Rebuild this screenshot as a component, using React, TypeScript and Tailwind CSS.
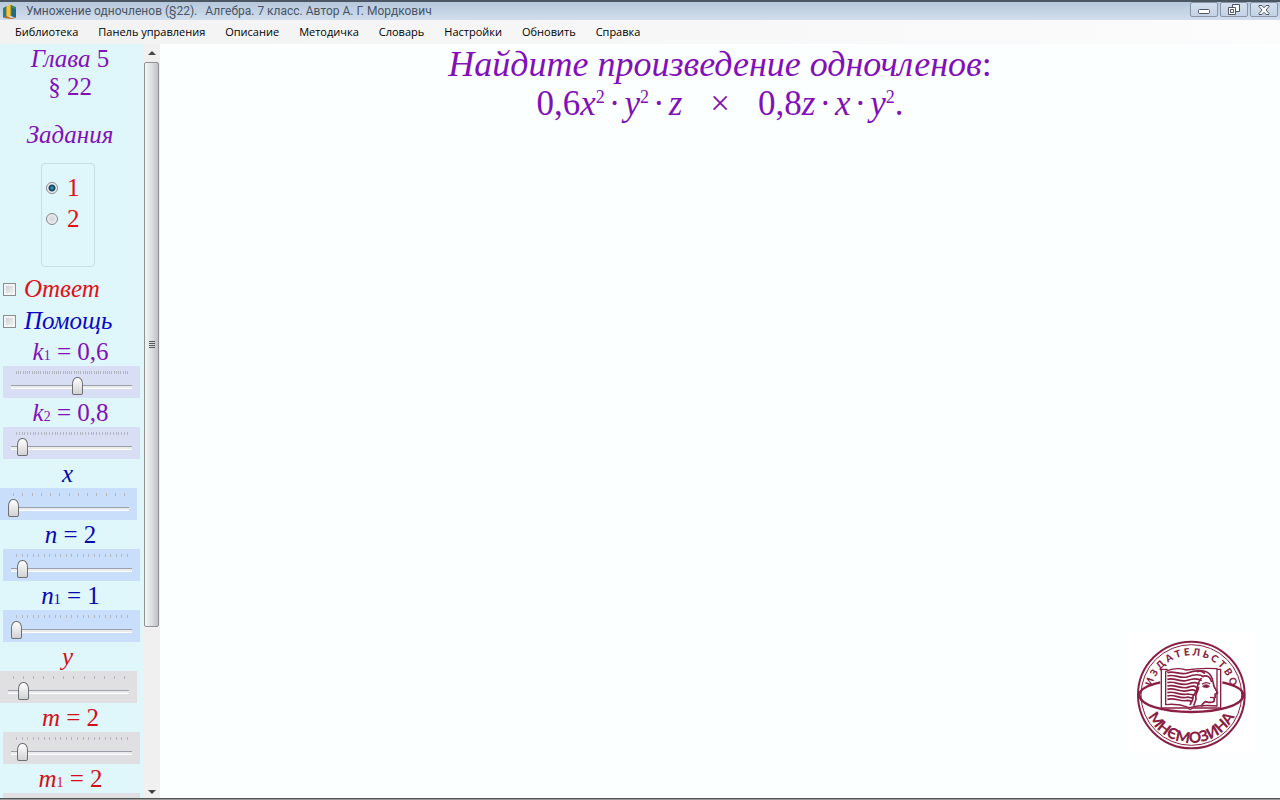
/* =========================================================
   ALGEBRA TRAINER
   Window with a menu, a panel of task parameters on the
   left and the task statement on the right.
========================================================= */

import { useState } from 'react';
import type { ReactNode } from 'react';
import clsx from 'clsx';

const MENU = [
  'Библиотека',
  'Панель управления',
  'Описание',
  'Методичка',
  'Словарь',
  'Настройки',
  'Обновить',
  'Справка',
];

type Param = {
  name: string;
  sub?: string;
  value?: string;
  position: number;
  ticks: number;
  text: string;
  bg: string;
  wide?: boolean;
};

const PARAMS: Param[] = [
  { name: 'k', sub: '1', value: '0,6', position: 55, ticks: 51, text: 'text-[#8210b8]', bg: 'bg-[#d8def4]' },
  { name: 'k', sub: '2', value: '0,8', position: 5, ticks: 41, text: 'text-[#8210b8]', bg: 'bg-[#d8def4]' },
  { name: 'x', position: 0, ticks: 13, text: 'text-[#0808b0]', bg: 'bg-[#c9defa]', wide: true },
  { name: 'n', value: '2', position: 5, ticks: 21, text: 'text-[#0808b0]', bg: 'bg-[#c9defa]' },
  { name: 'n', sub: '1', value: '1', position: 0, ticks: 21, text: 'text-[#0808b0]', bg: 'bg-[#c9defa]' },
  { name: 'y', position: 9, ticks: 12, text: 'text-[#d01018]', bg: 'bg-[#e0e0e2]', wide: true },
  { name: 'm', value: '2', position: 5, ticks: 21, text: 'text-[#d01018]', bg: 'bg-[#e0e0e2]' },
  { name: 'm', sub: '1', value: '2', position: 5, ticks: 21, text: 'text-[#d01018]', bg: 'bg-[#e0e0e2]' },
];

function AppIcon() {
  return (
    <svg viewBox="0 0 14 15" className="h-[15px] w-[14px]" aria-hidden="true">
      <path d="M0 4 4 2v10l-4 2z" fill="#2a7f8f" />
      <path d="M3 3 8 0v11l-5 3z" fill="#f2c53a" />
      <path d="M8 1l5 2v11l-5-2z" fill="#2c8f6a" />
      <path d="M9 4l4 1v9l-4-2z" fill="#1f6d83" />
      <path d="M0 14l4-2 4 2 5-1v1l-5 1z" fill="#c8762c" />
      <path d="M3 3v11M8 1v11" stroke="#6b5a28" strokeWidth=".7" />
    </svg>
  );
}

function WindowButton({ label, children }: { label: string; children: ReactNode }) {
  return (
    <button
      type="button"
      aria-label={label}
      className="flex h-[15px] w-[28px] items-center justify-center rounded-xs border border-[#8995a8] bg-gradient-to-b from-[#d3dfee] to-[#c3d2e5]"
    >
      {children}
    </button>
  );
}

function TitleBar() {
  return (
    <header className="flex h-5 shrink-0 items-center border-t-2 border-[#4b5663] bg-gradient-to-b from-[#b7c8dc] to-[#d0deed] pr-[2px] pl-[3px]">
      <AppIcon />
      <h1 className="ml-[9px] flex gap-2 font-['Roboto',sans-serif] text-xs whitespace-nowrap text-[#4a5565]">
        <span>Умножение одночленов (§22).</span>
        <span>Алгебра. 7 класс. Автор А. Г. Мордкович</span>
      </h1>
      <div className="ml-auto flex gap-[2px] self-start">
        <WindowButton label="Свернуть">
          <svg viewBox="0 0 12 5" className="mt-1 h-[5px] w-3">
            <rect x=".5" y=".5" width="11" height="4" rx="1" fill="#fff" stroke="#4e5666" />
          </svg>
        </WindowButton>
        <WindowButton label="Восстановить">
          <svg viewBox="0 0 12 11" className="h-[11px] w-3" fill="#fff" stroke="#4e5666">
            <path d="M4.5.5h7v7h-7z" />
            <path d="M.5 3.5h7v7h-7z" />
            <path d="M2.5 5.5h3v3h-3z" />
          </svg>
        </WindowButton>
        <WindowButton label="Закрыть">
          <svg viewBox="0 0 12 10" className="h-[10px] w-3">
            <path
              d="M1 .5h3l2 2.2 2-2.2h3v1L8 5l3 3.5v1H8L6 7.3 4 9.5H1v-1L4 5 1 1.5z"
              fill="#fff"
              stroke="#4e5666"
            />
          </svg>
        </WindowButton>
      </div>
    </header>
  );
}

function MenuBar() {
  return (
    <nav className="flex h-6 shrink-0 items-center gap-5 bg-gradient-to-r from-[#f2f2f2] to-[#fcfcfc] pl-[15px] text-[11px] whitespace-nowrap text-black">
      {MENU.map(item => (
        <button key={item} type="button">
          {item}
        </button>
      ))}
    </nav>
  );
}

function ParamSlider({ param }: { param: Param }) {
  const [position, setPosition] = useState(param.position);
  const id = `param-${param.name}${param.sub ?? ''}`;

  return (
    <div className={clsx('w-[137px]', !param.wide && 'ml-[3px]')}>
      <label htmlFor={id} className={clsx('block h-[29px] pr-[2px] text-center leading-[29px]', param.text)}>
        <i>{param.name}</i>
        {param.sub && <span className="text-sm leading-none">{param.sub}</span>}
        {param.value && ` = ${param.value}`}
      </label>
      <div className={clsx('h-8 pt-[5px] pl-2', param.bg)}>
        <div className="ml-[5px] flex h-1 w-28 justify-between">
          {Array.from({ length: param.ticks }, (_, i) => (
            <span key={i} className="h-[3px] w-px bg-[#b3b7c2]" />
          ))}
        </div>
        <input
          id={id}
          type="range"
          min={0}
          max={100}
          value={position}
          onChange={e => setPosition(Number(e.target.value))}
          className="block h-[23px] w-[121px] appearance-none bg-transparent [&::-webkit-slider-runnable-track]:h-1 [&::-webkit-slider-runnable-track]:border-t [&::-webkit-slider-runnable-track]:border-b [&::-webkit-slider-runnable-track]:border-t-[#9ba0a8] [&::-webkit-slider-runnable-track]:border-b-white [&::-webkit-slider-runnable-track]:bg-[#e9ebee] [&::-webkit-slider-thumb]:-mt-[9px] [&::-webkit-slider-thumb]:h-[18px] [&::-webkit-slider-thumb]:w-[11px] [&::-webkit-slider-thumb]:appearance-none [&::-webkit-slider-thumb]:rounded-[5px_5px_2px_2px/7px_7px_2px_2px] [&::-webkit-slider-thumb]:border [&::-webkit-slider-thumb]:border-[#6c6f73] [&::-webkit-slider-thumb]:bg-gradient-to-b [&::-webkit-slider-thumb]:from-white [&::-webkit-slider-thumb]:to-[#d2d2d2]"
        />
      </div>
    </div>
  );
}

function SidePanel() {
  const [task, setTask] = useState('1');

  return (
    <aside className="w-36 shrink-0 overflow-hidden bg-[#dff6fb] font-['Liberation_Serif','Times_New_Roman',serif] text-[25px] leading-7">
      <div className="w-[140px] pt-px text-center text-[#8210b8]">
        <p>
          <i>Глава</i> 5
        </p>
        <p>§ 22</p>
        <h2 className="mt-5 italic">Задания</h2>
      </div>

      <fieldset className="mt-[14px] ml-[41px] h-[104px] w-[54px] rounded-sm border border-[#c9dfe5] pt-2 pl-1 text-[#e01015]">
        {['1', '2'].map(n => (
          <label key={n} className="flex h-[31px] items-center gap-[9px]">
            <input
              type="radio"
              name="task"
              checked={task === n}
              onChange={() => setTask(n)}
              className="size-3 appearance-none rounded-full border border-[#83878c] bg-[radial-gradient(#d0d4d8,#f6f6f6)] checked:bg-[radial-gradient(circle,#3aa5c5_0,#123f5c_3px,#f4f4f4_4px)]"
            />
            {n}
          </label>
        ))}
      </fieldset>

      <div className="mt-[6px] pl-[3px] italic">
        <label className="flex h-8 items-center gap-2 text-[#e01015]">
          <input type="checkbox" className="size-[13px] appearance-none border border-[#8b8f94] bg-gradient-to-br from-[#c6cbd2] to-[#f6f6f6] shadow-[inset_0_0_0_2px_#f4f4f4]" />
          Ответ
        </label>
        <label className="flex h-8 items-center gap-2 text-[#0808c0]">
          <input type="checkbox" className="size-[13px] appearance-none border border-[#8b8f94] bg-gradient-to-br from-[#c6cbd2] to-[#f6f6f6] shadow-[inset_0_0_0_2px_#f4f4f4]" />
          Помощь
        </label>
      </div>

      {PARAMS.map(param => (
        <ParamSlider key={param.name + (param.sub ?? '')} param={param} />
      ))}
    </aside>
  );
}

function ScrollBar() {
  return (
    <div className="flex w-4 shrink-0 flex-col bg-[#f0f0f0]">
      <button type="button" aria-label="Вверх" className="flex h-[18px] items-center justify-center">
        <svg viewBox="0 0 8 4" className="h-1 w-2">
          <path d="M0 4l4-4 4 4z" fill="#444" />
        </svg>
      </button>
      <div className="flex-1">
        <div className="mr-px flex h-[78%] flex-col items-center justify-center gap-px rounded-xs border border-[#8f9194] bg-gradient-to-r from-[#f5f5f5] via-[#dedfe1] to-[#bfc0c4]">
          <span className="h-px w-[6px] bg-[#55585c]" />
          <span className="h-px w-[6px] bg-[#55585c]" />
          <span className="h-px w-[6px] bg-[#55585c]" />
          <span className="h-px w-[6px] bg-[#55585c]" />
        </div>
      </div>
      <button type="button" aria-label="Вниз" className="flex h-3 items-center justify-center">
        <svg viewBox="0 0 8 4" className="h-1 w-2">
          <path d="M0 0l4 4 4-4z" fill="#444" />
        </svg>
      </button>
    </div>
  );
}

function Power() {
  return <sup className="top-0 align-[12px] text-lg leading-none">2</sup>;
}

function Dot() {
  return <span className="mx-1">·</span>;
}

function Statement() {
  return (
    <div className="text-center font-['Liberation_Serif','Times_New_Roman',serif] text-4xl leading-10 text-[#8210b8]">
      <h2>
        <i>Найдите произведение одночленов</i>:
      </h2>
      <p className="text-[35px]">
        0,6<i>x</i>
        <Power />
        <Dot />
        <i>y</i>
        <Power />
        <Dot />
        <i>z</i>
        <span className="mx-7">×</span>
        0,8<i>z</i>
        <Dot />
        <i>x</i>
        <Dot />
        <i>y</i>
        <Power />.
      </p>
    </div>
  );
}

function PublisherLogo() {
  return (
    <svg viewBox="0 0 405 390" className="mt-auto mr-5 mb-[38px] h-[130px] w-[135px] self-end" role="img" aria-label="Мнемозина">
      <defs>
        <path id="arc-top" d="M78 197a121 121 0 0 1 242 0" />
        <path id="arc-bottom" d="M53 193a146 146 0 0 0 292 0" />
      </defs>
      <path d="M5 5h390v365H5z" fill="#fff" />
      <g fill="none" stroke="#8a1f44" strokeWidth="6">
        <circle cx="199" cy="195" r="160" />
        <circle cx="199" cy="195" r="151" strokeWidth="3" />
        <path d="M106 157C66 166 43 180 43 195c0 29 69 51 156 51s156-22 156-51c0-15-23-29-63-38" strokeWidth="7" />
      </g>
      <g fill="none" stroke="#8a1f44" strokeWidth="4" strokeLinejoin="round">
        <path d="M128 118h-19v116h79c5 5 10 5 15 0h84V118h-15" fill="#fff" />
        <path d="M122 124c20-10 42-10 62-4 34-6 62-6 92-4v112c-30-3-60-1-84 5-20-8-46-12-70-9z" fill="#fff" />
        <path
          strokeWidth="5"
          d="M127 128c22-7 39 9 61 1s40-10 52 2M127 138c22-7 39 10 61 2s38-8 48 1M127 148c22-7 39 11 61 3s32-6 42 1M127 158c22-7 39 11 61 4s27-4 36 1M127 168c22-7 39 11 61 4s22-2 30 2M127 178c22-7 39 11 61 4s20 0 26 3M127 188c22-7 39 11 61 4l22 3M127 198c22-7 39 11 61 3l17 4M127 208c22-7 39 9 61 3l14 3"
        />
        <path d="M216 125c26-8 42 5 47 27l4 17 11 20-8 4 1 8-4 3 1 8c-4 9-17 5-27 3-6 3-10 8-11 15" strokeWidth="5" />
        <path d="M231 139c18-5 24 2 29 17M230 144c-17 15-9 38-26 54 2 12-4 14-9 27M221 170c-2 21-13 20-8 38l-7 19" strokeWidth="5" />
        <path d="M232 169c8-7 16-6 22 0-6 6-15 5-22 0z" fill="#8a1f44" strokeWidth="2" />
        <path d="M231 163c8-6 18-6 24-1M267 203l-12-1" />
      </g>
      <g fill="#8a1f44" fontFamily="Lato, sans-serif" fontWeight="900" textAnchor="middle">
        <text fontSize="30">
          <textPath href="#arc-top" startOffset="50%">
            И З Д А Т Е Л Ь С Т В О
          </textPath>
        </text>
        <text fontSize="46">
          <textPath href="#arc-bottom" startOffset="50%">
            МНЄМОЗИНА
          </textPath>
        </text>
      </g>
    </svg>
  );
}

export default function App() {
  return (
    <div className="flex h-screen flex-col border-b border-[#999] bg-[#fbffff] font-['Open_Sans','Segoe_UI',sans-serif]">
      <TitleBar />
      <MenuBar />
      <div className="flex min-h-0 flex-1 border-b border-[#555]">
        <SidePanel />
        <ScrollBar />
        <main className="flex flex-1 flex-col">
          <Statement />
          <PublisherLogo />
        </main>
      </div>
    </div>
  );
}
